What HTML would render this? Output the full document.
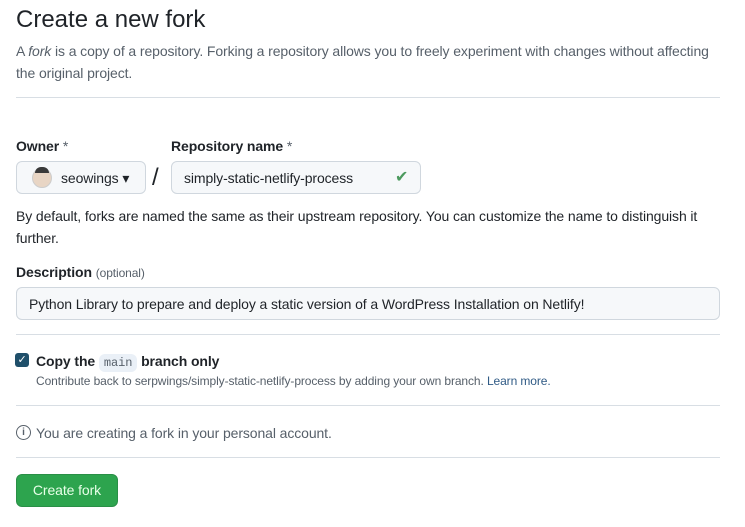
<!DOCTYPE html>
<html><head><style>
body{margin:0;width:745px;height:527px;background:#fff;font-family:"Liberation Sans",sans-serif;color:#1f2328;position:relative;overflow:hidden;letter-spacing:-0.1px}
.a{position:absolute;white-space:nowrap}
.hr{position:absolute;left:16px;width:704px;height:1px;background:#d8dee4}
.box{position:absolute;border:1px solid #d0d7de;border-radius:6px;background:#f6f8fa}
</style></head><body>
<div class="a" style="left:16px;top:6px;font-size:24px;letter-spacing:0">Create a new fork</div>
<div class="a" style="left:16px;top:40px;font-size:14px;color:#57606a;line-height:22px;white-space:normal;width:710px">A <i>fork</i> is a copy of a repository. Forking a repository allows you to freely experiment with changes without affecting the original project.</div>
<div class="hr" style="top:97px"></div>
<div class="a" style="left:16px;top:138px;font-size:14px;font-weight:bold">Owner <span style="font-weight:normal;color:#57606a">*</span></div>
<div class="a" style="left:171px;top:138px;font-size:14px;font-weight:bold">Repository name <span style="font-weight:normal;color:#57606a">*</span></div>
<div class="box" style="left:16px;top:161px;width:128px;height:31px"></div>
<div class="a" style="left:32px;top:168px;width:18px;height:18px;border-radius:50%;background:#e8d5c4;border:1px solid #ccc"></div>
<div class="a" style="left:35px;top:167px;width:14px;height:6px;border-radius:6px 6px 0 0;background:#3a3a3a"></div>
<div class="a" style="left:61px;top:170px;font-size:14px">seowings ▾</div>
<div class="a" style="left:152px;top:164px;font-size:24px">/</div>
<div class="box" style="left:171px;top:161px;width:248px;height:31px"></div>
<div class="a" style="left:184px;top:170px;font-size:14px">simply-static-netlify-process</div>
<div class="a" style="left:395px;top:167px;font-size:16px;color:#4c9a5e">✔</div>
<div class="a" style="left:16px;top:205px;font-size:14px;line-height:22px;white-space:normal;width:715px;color:#1f2328">By default, forks are named the same as their upstream repository. You can customize the name to distinguish it further.</div>
<div class="a" style="left:16px;top:264px;font-size:14px;font-weight:bold">Description <span style="font-weight:normal;font-size:12px;color:#57606a">(optional)</span></div>
<div class="box" style="left:16px;top:287px;width:702px;height:31px"></div>
<div class="a" style="left:29px;top:296px;font-size:14px">Python Library to prepare and deploy a static version of a WordPress Installation on Netlify!</div>
<div class="hr" style="top:334px"></div>
<div class="a" style="left:15px;top:353px;width:14px;height:14px;border-radius:3px;background:#1f4f6a;color:#fff;font-size:11px;text-align:center;line-height:14px">✓</div>
<div class="a" style="left:36px;top:353px;font-size:14px;font-weight:bold">Copy the <span style="font-family:'Liberation Mono',monospace;font-weight:normal;font-size:12px;background:#eaf0f7;padding:2px 5px;border-radius:6px;color:#57606a">main</span> branch only</div>
<div class="a" style="left:36px;top:374px;font-size:12px;color:#57606a">Contribute back to serpwings/simply-static-netlify-process by adding your own branch. <span style="color:#2f5a85">Learn more.</span></div>
<div class="hr" style="top:405px"></div>
<div class="a" style="left:16px;top:425px;width:13px;height:13px;border:1.5px solid #57606a;border-radius:50%;font-size:10px;text-align:center;line-height:13px;color:#57606a;font-weight:bold">i</div>
<div class="a" style="left:36px;top:425px;font-size:14px;color:#57606a">You are creating a fork in your personal account.</div>
<div class="hr" style="top:457px"></div>
<div class="a" style="left:16px;top:474px;width:100px;height:31px;background:#2da44e;border:1px solid #2a8f47;border-radius:6px;color:#e8ffe8;font-size:14px;text-align:center;line-height:31px">Create fork</div>
</body></html>
